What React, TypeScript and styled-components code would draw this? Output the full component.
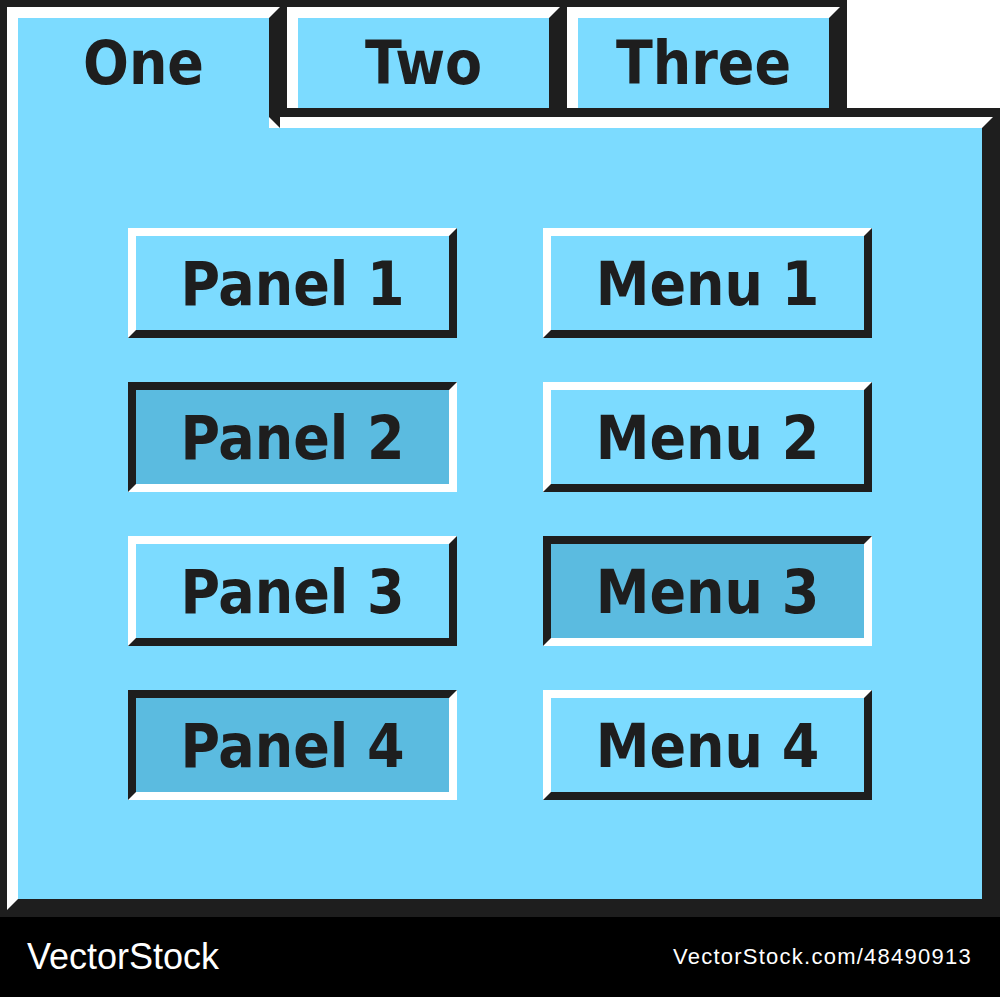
import styled, { createGlobalStyle } from "styled-components";

const BLUE = "#7cdbff";
const PRESSED = "#5bbbe0";
const DARK = "#1e1e1e";

const GlobalStyle = createGlobalStyle`
  html, body {
    margin: 0;
    padding: 0;
    background: #ffffff;
  }
  body {
    font-family: "DejaVu Sans Condensed", "DejaVu Sans", sans-serif;
  }
`;

const tabs = ["One", "Two", "Three"];

const buttons = [
    { label: "Panel 1", pressed: false },
    { label: "Panel 2", pressed: true },
    { label: "Panel 3", pressed: false },
    { label: "Panel 4", pressed: true },
    { label: "Menu 1", pressed: false },
    { label: "Menu 2", pressed: false },
    { label: "Menu 3", pressed: true },
    { label: "Menu 4", pressed: false },
];

export default function App() {
    return (
        <Page>
            <GlobalStyle />
            <Frame>
                <TabRow>
                    {tabs.map((name, i) => (
                        <Tab key={name} $active={i === 0}>
                            {name}
                        </Tab>
                    ))}
                </TabRow>
                <Body>
                    <Bevel>
                        <ButtonGrid>
                            {buttons.map((b) => (
                                <BevelButton key={b.label} $pressed={b.pressed}>
                                    {b.label}
                                </BevelButton>
                            ))}
                        </ButtonGrid>
                    </Bevel>
                </Body>
            </Frame>
            <Footer>
                <Brand>VectorStock</Brand>
                <StockId>VectorStock.com/48490913</StockId>
            </Footer>
        </Page>
    );
}

const Page = styled.div`
  width: 1000px;
  height: 997px;
  display: flex;
  flex-direction: column;
  overflow: hidden;
`;

const Frame = styled.div`
  height: 917px;
  display: flex;
  flex-direction: column;
`;

const TabRow = styled.div`
  align-self: flex-start;
  display: flex;
  align-items: flex-start;
  gap: 7px;
  padding: 7px 7px 0 7px;
  background: ${DARK};
`;

// the active tab runs 20px down into the body so its blue joins the panel
const Tab = styled.div<{ $active?: boolean }>`
  position: relative;
  z-index: ${(p) => (p.$active ? 1 : 0)};
  width: 251px;
  height: 90px;
  margin-bottom: ${(p) => (p.$active ? "-20px" : "0")};
  padding-bottom: ${(p) => (p.$active ? "20px" : "0")};
  box-sizing: content-box;
  border-style: solid;
  border-width: 11px 11px 0 11px;
  border-color: #ffffff ${DARK} transparent #ffffff;
  background: ${BLUE};
  display: flex;
  align-items: center;
  justify-content: center;
  color: ${DARK};
  font-size: 60px;
  font-weight: 700;
  font-stretch: condensed;
  line-height: 1;

  &::after {
    content: "";
    display: ${(p) => (p.$active ? "block" : "none")};
    position: absolute;
    right: -11px;
    bottom: 0;
    width: 0;
    height: 0;
    border-left: 11px solid #ffffff;
    border-top: 11px solid transparent;
  }
`;

const Body = styled.div`
  flex: 1;
  display: flex;
  padding: 9px 7px 7px 7px;
  background: ${DARK};
`;

const Bevel = styled.div`
  flex: 1;
  display: flex;
  align-items: center;
  justify-content: center;
  border-style: solid;
  border-width: 11px;
  border-color: #ffffff ${DARK} ${DARK} #ffffff;
  background: ${BLUE};
`;

const ButtonGrid = styled.div`
  display: grid;
  grid-template-columns: repeat(2, 329px);
  grid-template-rows: repeat(4, 110px);
  grid-auto-flow: column;
  column-gap: 86px;
  row-gap: 44px;
`;

const BevelButton = styled.div<{ $pressed?: boolean }>`
  box-sizing: border-box;
  border-style: solid;
  border-width: 8px;
  border-color: ${(p) =>
    p.$pressed
      ? `${DARK} #ffffff #ffffff ${DARK}`
      : `#ffffff ${DARK} ${DARK} #ffffff`};
  background: ${(p) => (p.$pressed ? PRESSED : BLUE)};
  display: flex;
  align-items: center;
  justify-content: center;
  padding-top: 2px;
  color: ${DARK};
  font-size: 60px;
  font-weight: 700;
  font-stretch: condensed;
  line-height: 1;
`;

const Footer = styled.div`
  height: 80px;
  background: #000000;
  display: flex;
  align-items: center;
  justify-content: space-between;
  padding: 0 28px 0 27px;
  color: #ffffff;
  font-family: "Liberation Sans", Arial, sans-serif;
`;

const Brand = styled.span`
  font-size: 36px;
  letter-spacing: 0;
`;

const StockId = styled.span`
  font-size: 22px;
  letter-spacing: 1.25px;
`;
